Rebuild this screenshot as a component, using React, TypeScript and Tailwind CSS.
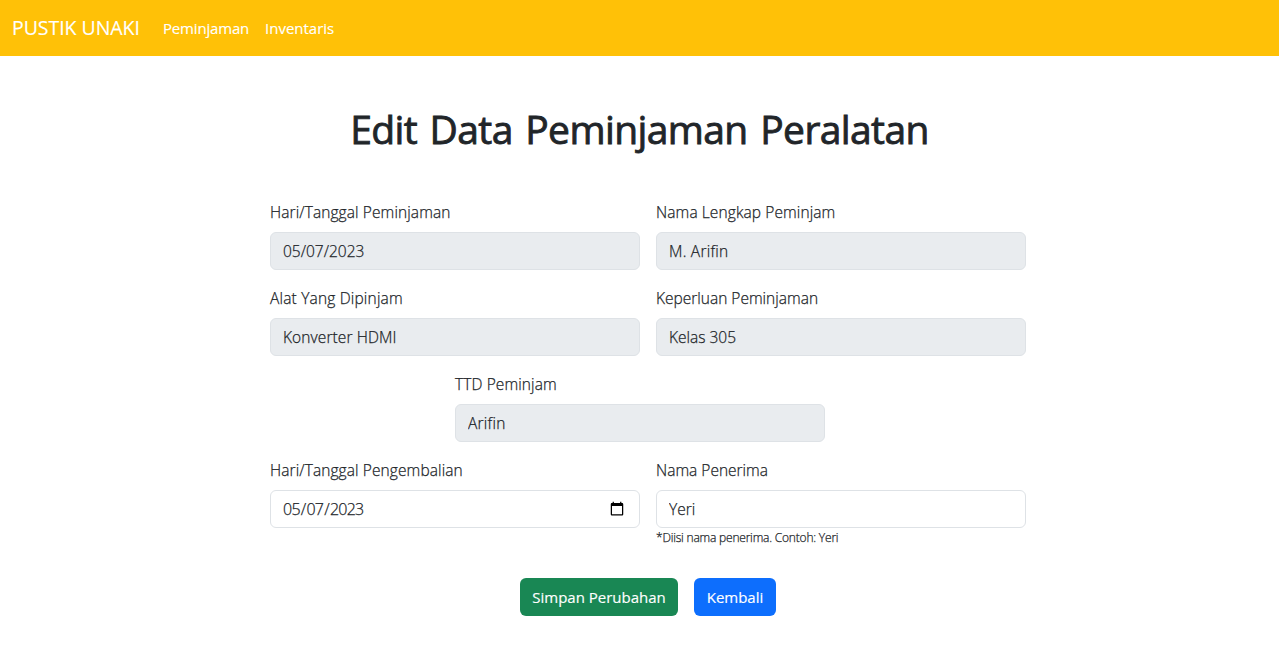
type FieldProps = {
  id: string;
  label: string;
  value: string;
  type?: string;
  disabled?: boolean;
  hint?: string;
  labelClass?: string;
  valueClass?: string;
};

function Field({
  id,
  label,
  value,
  type = "text",
  disabled = false,
  hint,
  labelClass = "tracking-[0.1px]",
  valueClass = "px-3 text-[15.5px]",
}: FieldProps) {
  return (
    <div className="w-[370px]">
      <label htmlFor={id} className={`mb-2 block w-max whitespace-nowrap leading-6 ${labelClass}`}>
        {label}
      </label>
      <input
        id={id}
        type={type}
        defaultValue={value}
        disabled={disabled}
        className={`block h-[38px] w-full rounded-md border border-[#dee2e6] bg-white py-1.5 leading-6 text-[#212529] opacity-100 outline-none [-webkit-text-stroke:0.25px] disabled:bg-[#e9ecef] ${valueClass}`}
      />
      {hint && <p className="w-max whitespace-nowrap text-[12px] leading-5 tracking-[-0.2px]">{hint}</p>}
    </div>
  );
}

export default function App() {
  return (
    <div className="min-h-[647px] bg-white font-['Open_Sans','Noto_Sans',sans-serif] text-[15.5px] font-light text-[#212529] [-webkit-text-stroke:0.25px]">
      <nav className="flex h-14 items-center bg-[#ffc107] px-3 text-[15px] font-normal text-white [-webkit-text-stroke:0.15px]">
        <a href="#" className="w-[143px] whitespace-nowrap text-[19.5px] leading-[30px] tracking-[-0.05px]">PUSTIK UNAKI</a>
        <a href="#" className="w-[102px] px-2 leading-6 tracking-[-0.18px]">Peminjaman</a>
        <a href="#" className="px-2 leading-6">Inventaris</a>
      </nav>
      <main>
        <h1 className="mt-[49px] text-center text-[39px] font-normal leading-12 tracking-[-0.6px] [word-spacing:3px] [-webkit-text-stroke:0.85px]">Edit Data Peminjaman Peralatan</h1>
        <form className="mt-[47px] ml-[270px] flex w-[756px] flex-col gap-4">
          <div className="flex gap-4">
            <Field id="tanggal-pinjam" label="Hari/Tanggal Peminjaman" value="05/07/2023" disabled />
            <Field id="nama" label="Nama Lengkap Peminjam" value="M. Arifin" disabled valueClass="px-3 text-[15.5px] tracking-[0.25px]" />
          </div>
          <div className="flex gap-4">
            <Field id="alat" label="Alat Yang Dipinjam" value="Konverter HDMI" disabled labelClass="tracking-[0.18px]" valueClass="px-3 text-[15.5px] tracking-[0.1px]" />
            <Field id="keperluan" label="Keperluan Peminjaman" value="Kelas 305" disabled labelClass="tracking-[0px]" />
          </div>
          <div className="ml-[185px]">
            <Field id="ttd" label="TTD Peminjam" value="Arifin" disabled valueClass="px-3 text-[15.5px] tracking-[0.25px]" />
          </div>
          <div className="flex h-[88px] gap-4">
            <Field id="tanggal-kembali" label="Hari/Tanggal Pengembalian" value="2023-05-07" type="date" valueClass="pl-[11px] pr-3 text-[16px] tracking-[-0.75px]" labelClass="tracking-[0.1px]" />
            <Field id="penerima" label="Nama Penerima" value="Yeri" hint="*Diisi nama penerima. Contoh: Yeri" labelClass="tracking-[0px]" />
          </div>
          <div className="ml-[250px] mt-4 flex gap-4 text-[15px] font-normal text-white [-webkit-text-stroke:0.15px]">
            <button type="submit" className="h-[38px] w-[158px] whitespace-nowrap rounded-md bg-[#198754]">Simpan Perubahan</button>
            <button type="button" className="h-[38px] w-[82px] whitespace-nowrap rounded-md bg-[#0d6efd]">Kembali</button>
          </div>
        </form>
      </main>
    </div>
  );
}
